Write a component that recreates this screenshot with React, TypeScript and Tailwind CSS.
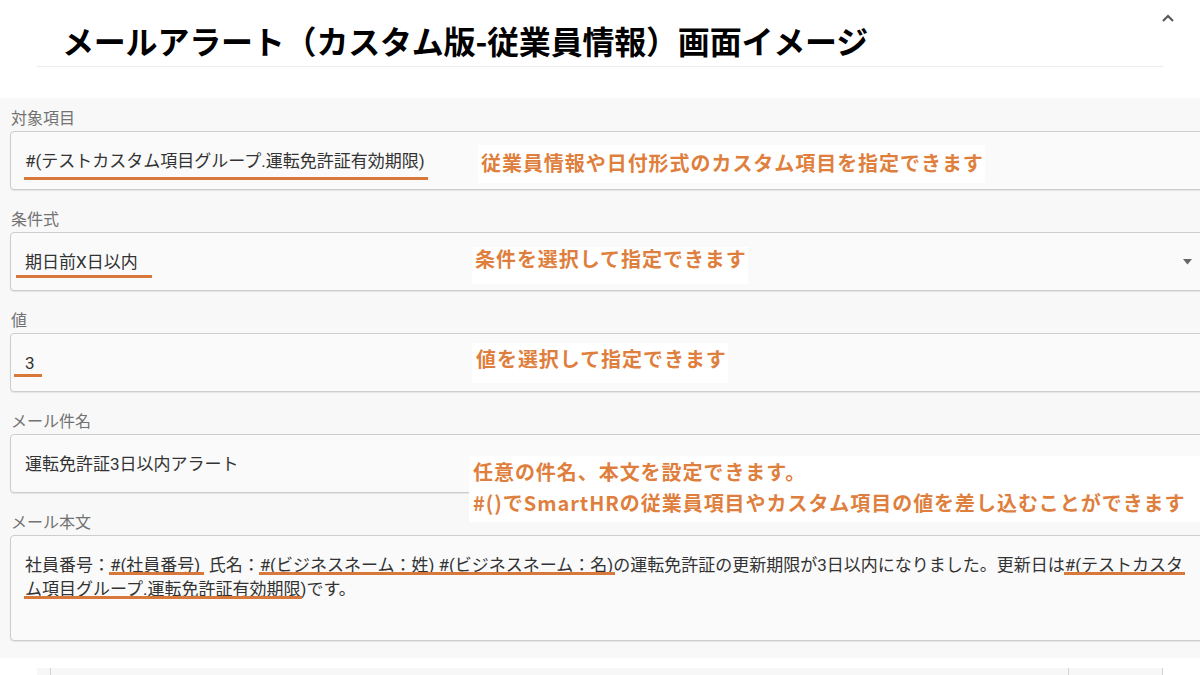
import { ReactNode } from "react"

const jp = "font-['Roboto','Noto_Sans_CJK_JP',sans-serif]"

// orange hand-drawn underline under a piece of text
const Mark = ({ children, bar }: { children: ReactNode; bar: string }) => (
    <span className="relative inline-block">
        {children}
        <span className={"absolute h-[3px] bg-[#d8783a] " + bar} />
    </span>
)

const Label = ({ children }: { children: ReactNode }) => (
    <div className="pl-[11px] h-[24px] text-[16px] leading-[24px] text-[#727272]">{children}</div>
)

const Box = ({ children, className = "" }: { children: ReactNode; className?: string }) => (
    <div
        className={
            "ml-[10px] w-[1205px] border border-[#cdcdcd] rounded-[4px] bg-[#fafafa] shadow-[0_1px_1px_rgba(0,0,0,0.08)] text-[17px] leading-[24px] text-[#333] " +
            className
        }
    >
        {children}
    </div>
)

const Note = ({ children, className }: { children: ReactNode; className: string }) => (
    <div
        className={
            "absolute bg-white text-[20px] font-bold tracking-[0.95px] text-[#df7f3e] font-['Noto_Sans_CJK_JP',sans-serif] " +
            className
        }
    >
        {children}
    </div>
)

export default function App() {
    return (
        <div className={"w-[1200px] h-[675px] overflow-hidden bg-white " + jp}>
            <div className="relative mx-[37px] h-[67px] border-b border-[#ededed] pl-[25px] pt-[15px]">
                <h1 className="text-[32px] leading-[50px] font-bold text-black font-['Noto_Sans_CJK_JP',sans-serif] tracking-[-0.2px]">
                    メールアラート（カスタム版-従業員情報）画面イメージ
                </h1>
                <svg className="absolute right-[-11px] top-[14px]" width="12" height="8" viewBox="0 0 12 8">
                    <polyline points="1,7 6,2 11,7" fill="none" stroke="#555" strokeWidth="2" />
                </svg>
            </div>

            <div className="relative mt-[31px] bg-[#f8f8f8] pt-[9px] pb-[17px] overflow-hidden">
                <div className="flex flex-col gap-[18px]">
                    <div>
                        <Label>対象項目</Label>
                        <Box className="h-[59px] flex items-center px-[14px]">
                            <Mark bar="-left-px -right-[3px] top-[28px]">#(テストカスタム項目グループ.運転免許証有効期限)</Mark>
                        </Box>
                    </div>
                    <div>
                        <Label>条件式</Label>
                        <Box className="h-[59px] flex items-center justify-between pl-[14px] pr-[22px]">
                            <Mark bar="-left-[9px] -right-[14px] top-[25px]">期日前X日以内</Mark>
                            <svg width="9" height="6" viewBox="0 0 9 6">
                                <polygon points="0,0 9,0 4.5,5.5" fill="#666" />
                            </svg>
                        </Box>
                    </div>
                    <div>
                        <Label>値</Label>
                        <Box className="h-[59px] flex items-center px-[14px]">
                            <Mark bar="-left-[11px] -right-[7px] top-[23px]">3</Mark>
                        </Box>
                    </div>
                    <div>
                        <Label>メール件名</Label>
                        <Box className="h-[59px] flex items-center px-[14px]">運転免許証3日以内アラート</Box>
                    </div>
                    <div>
                        <Label>メール本文</Label>
                        <Box className="h-[106px] px-[14px] pt-[17px]">
                            <div className="whitespace-nowrap">
                                社員番号：<Mark bar="-left-px -right-[4px] top-[19px]">#(社員番号)</Mark>
                                {"\u00a0 "}氏名：
                                <Mark bar="-left-px -right-[2px] top-[19px]">#(ビジネスネーム：姓) #(ビジネスネーム：名)</Mark>
                                の運転免許証の更新期限が3日以内になりました。更新日は
                                <Mark bar="-left-px -right-[2px] top-[19px]">#(テストカスタ</Mark>
                            </div>
                            <div className="whitespace-nowrap">
                                <Mark bar="-left-[1px] -right-[2px] top-[19px]">ム項目グループ.運転免許証有効期限</Mark>)です。
                            </div>
                        </Box>
                    </div>
                </div>

                <Note className="left-[478px] top-[47px] w-[507px] h-[38px] pl-[3px] leading-[36px]">
                    従業員情報や日付形式のカスタム項目を指定できます
                </Note>
                <Note className="left-[472px] top-[149px] w-[276px] h-[37px] pl-[3px] leading-[24px]">
                    条件を選択して指定できます
                </Note>
                <Note className="left-[472px] top-[245px] w-[256px] h-[40px] pl-[4px] leading-[32px]">
                    値を選択して指定できます
                </Note>
                <Note className="left-[469px] top-[358px] w-[740px] h-[66px] pl-[4px] leading-[31px]">
                    <div>任意の件名、本文を設定できます。</div>
                    <div>#()でSmartHRの従業員項目やカスタム項目の値を差し込むことができます</div>
                </Note>
            </div>

            <div className="mt-[10px] mx-[37px] h-[20px] bg-[#f7f7f7] flex">
                <div className="w-[13px]" />
                <div className="w-[1019px] border-l border-[#d4d4d4]" />
                <div className="w-[94px] border-l border-[#d4d4d4]" />
                <div className="flex-1 border-l border-[#d4d4d4]" />
            </div>
        </div>
    )
}
